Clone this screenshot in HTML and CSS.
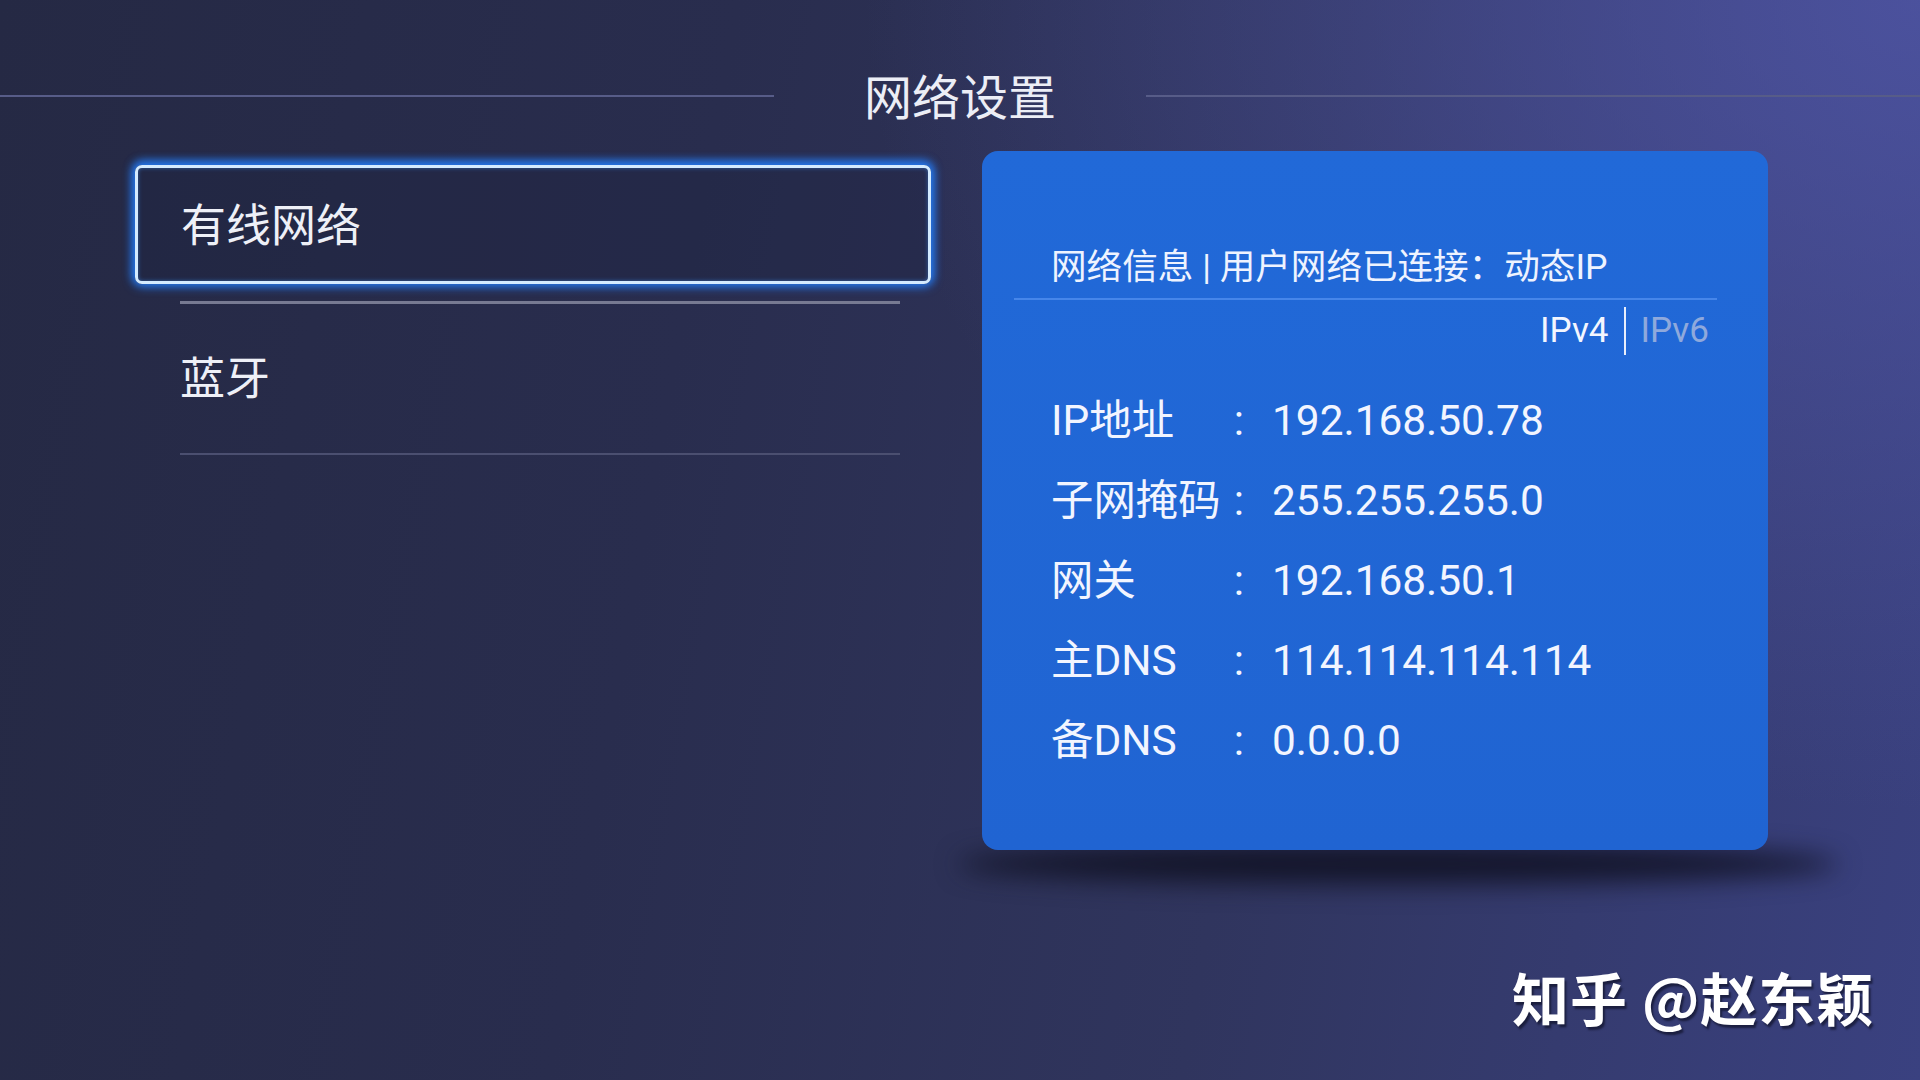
FILE: index.html
```html
<!DOCTYPE html>
<html lang="zh-CN">
<head>
<meta charset="utf-8">
<title>网络设置</title>
<link rel="stylesheet" href="styles.css">
</head>
<body>
<div class="screen">
  <header class="topbar">
    <span class="rule"></span>
    <h1 class="title">网络设置</h1>
    <span class="rule"></span>
  </header>
  <main class="content">
    <nav class="menu">
      <div class="item item-focused">有线网络</div>
      <div class="sep sep-strong"></div>
      <div class="item item-plain">蓝牙</div>
      <div class="sep"></div>
    </nav>
    <section class="panel">
      <div class="panel-head">网络信息 | 用户网络已连接：动态IP</div>
      <div class="tabs">
        <span class="tab tab-on">IPv4</span>
        <span class="tab-bar"></span>
        <span class="tab tab-off">IPv6</span>
      </div>
      <div class="info">
        <div class="row"><span class="lbl">IP地址</span><span class="colon">:</span><span class="val">192.168.50.78</span></div>
        <div class="row"><span class="lbl">子网掩码</span><span class="colon">:</span><span class="val">255.255.255.0</span></div>
        <div class="row"><span class="lbl">网关</span><span class="colon">:</span><span class="val">192.168.50.1</span></div>
        <div class="row"><span class="lbl">主DNS</span><span class="colon">:</span><span class="val">114.114.114.114</span></div>
        <div class="row"><span class="lbl">备DNS</span><span class="colon">:</span><span class="val">0.0.0.0</span></div>
      </div>
    </section>
  </main>
  <div class="watermark">知乎 @赵东颖</div>
</div>
</body>
</html>
```
FILE: styles.css
```css
html, body {
  margin: 0;
  padding: 0;
}
body {
  width: 1920px;
  height: 1080px;
  overflow: hidden;
  font-family: Roboto, "Noto Sans CJK SC", sans-serif;
  color: #f2f4fb;
  background:
    radial-gradient(ellipse 55% 75% at 100% 0%, rgba(82, 88, 170, 0.75) 0%, rgba(82, 88, 170, 0) 100%),
    linear-gradient(100deg, #252944 0%, #292d4e 35%, #30355e 65%, #3a4180 100%);
}
.screen {
  position: relative;
  width: 1920px;
  height: 1080px;
}
.topbar {
  display: flex;
  align-items: center;
  gap: 90px;
  padding-top: 70px;
  height: 48px;
}
.rule {
  flex: 1;
  height: 2px;
  background: #575c88;
  position: relative;
  top: 2px;
}
.title {
  margin: 0;
  font-family: "Noto Sans CJK SC", sans-serif;
  font-weight: 400;
  font-size: 48px;
  line-height: 48px;
  color: #eceef6;
  width: 192px;
}
.content {
  display: flex;
  align-items: flex-start;
  gap: 51px;
  padding-left: 135px;
  margin-top: 33px;
}
.menu {
  width: 796px;
  padding-top: 14px;
  display: flex;
  flex-direction: column;
}
.item {
  height: 149px;
  display: flex;
  align-items: center;
  padding-left: 45px;
  font-family: "Noto Sans CJK SC", sans-serif;
  font-size: 45px;
  line-height: 50px;
  color: #eef0f7;
}
.item-plain {
  padding-bottom: 6px;
  height: 143px;
}
.item-focused {
  padding-left: 43px;
  padding-bottom: 3px;
  box-sizing: content-box;
  height: 110px;
  border: 3px solid #d4ebff;
  border-radius: 7px;
  background: rgba(30, 34, 62, 0.35);
  box-shadow: 0 0 10px 3px rgba(36, 128, 255, 0.85), 0 -3px 8px 2px rgba(36, 128, 255, 0.5), inset 0 0 4px rgba(60, 150, 255, 0.5);
}
.sep {
  margin-left: 45px;
  width: 720px;
  height: 2px;
  background: #4b4f70;
}
.sep-strong {
  margin-top: 17px;
  height: 3px;
  background: #777a92;
}
.panel {
  position: relative;
  width: 786px;
  height: 699px;
  box-sizing: border-box;
  border-radius: 16px;
  background: linear-gradient(180deg, #2169d8 0%, #2064d2 100%);
  padding-top: 85px;
}
.panel::after {
  content: "";
  position: absolute;
  left: -24px;
  right: -70px;
  bottom: -34px;
  height: 40px;
  border-radius: 50%;
  background: rgba(14, 15, 32, 0.85);
  filter: blur(13px);
  z-index: -1;
}
.panel-head {
  margin-left: 32px;
  width: 703px;
  box-sizing: border-box;
  padding-left: 37px;
  font-size: 35.6px;
  line-height: 62px;
  border-bottom: 2px solid #4686ea;
  color: #eef3ff;
}
.tabs {
  display: flex;
  justify-content: flex-end;
  align-items: center;
  padding-right: 59px;
  height: 62px;
  gap: 15px;
  font-size: 35px;
  line-height: 40px;
}
.tab-on { color: #f3f6ff; }
.tab-off { color: #8fa9dc; }
.tab-bar {
  width: 2px;
  height: 48px;
  background: #e8eefc;
}
.info {
  margin-top: 19px;
  padding-left: 69px;
}
.row {
  display: flex;
  align-items: center;
  height: 80px;
  font-size: 42.4px;
  line-height: 80px;
  color: #f2f5ff;
}
.lbl {
  width: 165px;
  white-space: nowrap;
}
.colon {
  width: 46px;
  text-align: center;
}
.val {
  margin-left: 10px;
}
.watermark {
  position: absolute;
  left: 1512px;
  top: 961px;
  font-family: "Noto Sans CJK SC", sans-serif;
  font-weight: 700;
  font-size: 57px;
  line-height: 70px;
  color: #ffffff;
  letter-spacing: 1px;
  text-shadow: 2px 3px 2px rgba(10, 12, 30, 0.6);
  white-space: nowrap;
}
```
